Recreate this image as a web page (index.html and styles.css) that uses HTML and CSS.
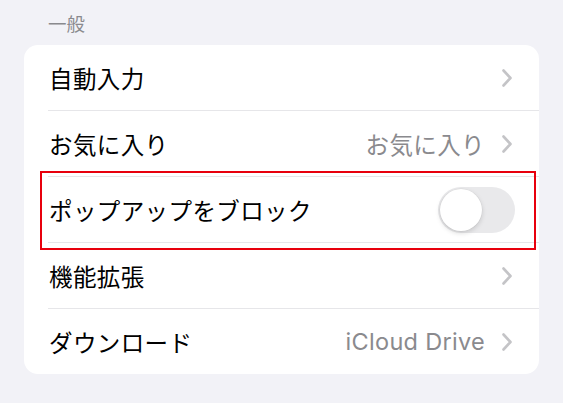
FILE: index.html
```html
<!DOCTYPE html>
<html lang="ja">
<head>
<meta charset="utf-8">
<link rel="stylesheet" href="styles.css">
</head>
<body>
<div class="section-header">一般</div>
<div class="card">
  <div class="row">
    <span class="label">自動入力</span>
    <span class="trail">
      <svg class="chev" viewBox="0 0 12 20" width="12" height="20"><path d="M2.5 2.5 L9.5 10 L2.5 17.5" fill="none" stroke="#c4c4c7" stroke-width="2.6" stroke-linecap="round" stroke-linejoin="round"/></svg>
    </span>
  </div>
  <div class="row">
    <span class="label">お気に入り</span>
    <span class="trail">
      <span class="value">お気に入り</span>
      <svg class="chev" viewBox="0 0 12 20" width="12" height="20"><path d="M2.5 2.5 L9.5 10 L2.5 17.5" fill="none" stroke="#c4c4c7" stroke-width="2.6" stroke-linecap="round" stroke-linejoin="round"/></svg>
    </span>
  </div>
  <div class="row highlighted">
    <span class="label">ポップアップをブロック</span>
    <span class="toggle"><span class="knob"></span></span>
    <span class="highlight-box"></span>
  </div>
  <div class="row">
    <span class="label">機能拡張</span>
    <span class="trail">
      <svg class="chev" viewBox="0 0 12 20" width="12" height="20"><path d="M2.5 2.5 L9.5 10 L2.5 17.5" fill="none" stroke="#c4c4c7" stroke-width="2.6" stroke-linecap="round" stroke-linejoin="round"/></svg>
    </span>
  </div>
  <div class="row last">
    <span class="label">ダウンロード</span>
    <span class="trail">
      <span class="value latin">iCloud Drive</span>
      <svg class="chev" viewBox="0 0 12 20" width="12" height="20"><path d="M2.5 2.5 L9.5 10 L2.5 17.5" fill="none" stroke="#c4c4c7" stroke-width="2.6" stroke-linecap="round" stroke-linejoin="round"/></svg>
    </span>
  </div>
</div>
</body>
</html>
```

FILE: styles.css
```css
html, body {
  margin: 0;
  padding: 0;
}
body {
  background: #f2f2f7;
  font-family: "Inter", "Noto Sans CJK JP", sans-serif;
  color: #000;
  width: 563px;
  height: 403px;
  overflow: hidden;
}
.section-header {
  height: 45px;
  display: flex;
  align-items: center;
  padding-left: 48px;
  font-size: 18.5px;
  color: #8a8a8e;
  box-sizing: border-box;
  padding-top: 1px;
}
.card {
  margin: 0 24px;
  background: #fff;
  border-radius: 14px;
}
.row {
  position: relative;
  margin-left: 24px;
  padding-left: 1px;
  padding-right: 26px;
  height: 65px;
  display: flex;
  align-items: center;
  justify-content: space-between;
  border-bottom: 1px solid #e6e6e9;
}
.row.last {
  border-bottom: none;
}
.label {
  font-size: 23.5px;
  letter-spacing: 0.4px;
}
.trail {
  display: flex;
  align-items: center;
  gap: 16px;
}
.value {
  font-size: 23.5px;
  letter-spacing: 0.4px;
  color: #8a8a8e;
}
.value.latin {
  letter-spacing: 0.3px;
}
.chev {
  display: block;
}
.toggle {
  position: relative;
  width: 77px;
  height: 46px;
  border-radius: 23px;
  background: #e9e9eb;
  margin-right: -2px;
}
.knob {
  position: absolute;
  left: 2px;
  top: 2px;
  width: 42px;
  height: 42px;
  border-radius: 50%;
  background: #fff;
  box-shadow: 0 2px 5px rgba(0,0,0,0.15), 0 0 0 0.5px rgba(0,0,0,0.05);
}
.highlight-box {
  position: absolute;
  left: -8px;
  right: 3px;
  top: -6px;
  height: 79px;
  border: 2px solid #e8000d;
  box-sizing: border-box;
  pointer-events: none;
}
```
